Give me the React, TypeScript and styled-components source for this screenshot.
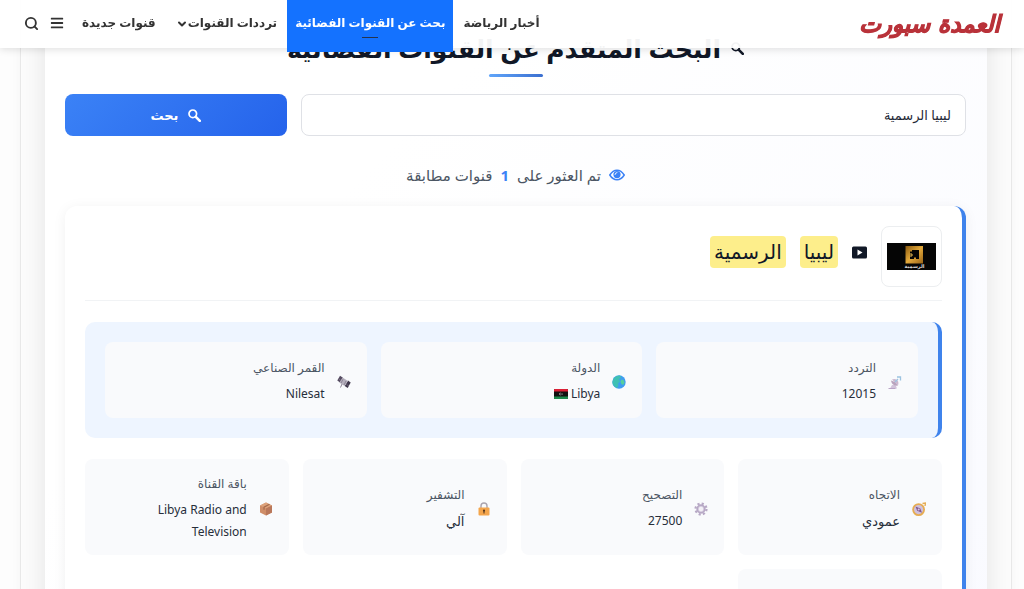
import React from "react";
import styled, { createGlobalStyle } from "styled-components";
import { FaBars } from "react-icons/fa";
import { ChevronDown, Search } from "lucide-react";

const GlobalStyle = createGlobalStyle`
  *, *::before, *::after { box-sizing: border-box; }
  html { overflow: hidden; }
  body {
    margin: 0;
    background: #fdfdfd;
    color: #374151;
    font-family: "Noto Sans", "DejaVu Sans", sans-serif;
    font-size: 13px;
  }
  h1, h2, p, dl, dt, dd, ul { margin: 0; padding: 0; }
`;

const Header = styled.header`
  position: fixed;
  inset: 0 0 auto 0;
  z-index: 10;
  height: 48px;
  padding: 0 24px 0 18px;
  display: flex;
  align-items: center;
  justify-content: space-between;
  background: rgba(255, 255, 255, 0.95);
  box-shadow: 0 1px 8px rgba(0, 0, 0, 0.14);
`;

const Logo = styled.a`
  color: #b9323a;
  font-family: "DejaVu Sans", sans-serif;
  font-size: 23px;
  font-weight: 700;
  font-style: italic;
  line-height: 32px;
  white-space: nowrap;
  text-decoration: none;
  -webkit-text-stroke: 1px #b9323a;
`;

const Nav = styled.nav`
  display: flex;
  align-items: center;
  height: 100%;
`;

const NavLink = styled.a<{ $active?: boolean }>`
  position: relative;
  align-self: flex-start;
  display: flex;
  align-items: center;
  height: ${(p) => (p.$active ? 52 : 48)}px;
  padding: ${(p) => (p.$active ? "0 8px 8px" : "0 10px 4px")};
  background: ${(p) => (p.$active ? "#1472ff" : "transparent")};
  color: ${(p) => (p.$active ? "#fff" : "#333")};
  font-size: 12px;
  font-weight: 700;
  white-space: nowrap;
  text-decoration: none;
  svg { margin-top: 4px; }
  &::after {
    content: "";
    display: ${(p) => (p.$active ? "block" : "none")};
    position: absolute;
    top: 37px;
    left: 50%;
    width: 16px;
    height: 1px;
    margin-left: -8px;
    background: #26334d;
  }
`;

const Tools = styled.div`
  display: flex;
  margin: 0 2px 2px 0;
`;

const IconButton = styled.button`
  display: flex;
  align-items: center;
  justify-content: center;
  width: 26px;
  height: 26px;
  padding: 0;
  border: 0;
  background: none;
  color: #333;
`;

const Frame = styled.div`
  margin: 0 12px 0 20px;
  padding: 0 24px;
  border: 1px solid #e8e8e8;
  border-width: 0 1px;
  background: #fcfcfc;
  box-shadow: 0 0 10px rgba(0, 0, 0, 0.04);
  overflow: hidden;
`;

const Panel = styled.main`
  padding: 26px 21px 24px 20px;
  background: linear-gradient(135deg, #ffffff 30%, #f9faff 100%);
  box-shadow: 0 0 25px rgba(0, 0, 0, 0.1);
`;

const Title = styled.h1`
  display: flex;
  flex-direction: column;
  align-items: center;
  color: #111827;
  font-size: 25px;
  font-weight: 700;
  line-height: 44px;
  &::after {
    content: "";
    width: 54px;
    height: 3px;
    margin-top: 4px;
    border-radius: 2px;
    background: linear-gradient(90deg, #60a5fa, #3b6fd0);
  }
`;

const TitleText = styled.span`
  display: flex;
  align-items: center;
  gap: 10px;
  white-space: nowrap;
`;

const SearchForm = styled.form`
  display: grid;
  grid-template-columns: 3fr 1fr;
  gap: 14px;
  margin-top: 17px;
`;

const SearchInput = styled.input`
  min-width: 0;
  height: 42px;
  padding: 0 14px;
  border: 1px solid #dfe1e6;
  border-radius: 8px;
  background: #fff;
  color: #1f2937;
  font: inherit;
  font-size: 13px;
`;

const SearchButton = styled.button`
  display: flex;
  align-items: center;
  justify-content: center;
  gap: 10px;
  height: 42px;
  padding: 0;
  border: 0;
  border-radius: 8px;
  background: linear-gradient(135deg, #3b82f6, #2563eb);
  color: #fff;
  font: inherit;
  font-size: 13px;
  font-weight: 600;
`;

const Count = styled.p`
  display: flex;
  align-items: center;
  justify-content: center;
  gap: 8px;
  margin: 26px 0 18px;
  color: #4b5563;
  font-size: 15px;
  font-weight: 500;
  line-height: 26px;
  white-space: nowrap;
  strong {
    color: #3b82f6;
    font-weight: 700;
  }
`;

const Card = styled.article`
  padding: 20px;
  border-right: 4px solid #3f83ec;
  border-radius: 12px;
  background: #fff;
  box-shadow: 0 2px 14px rgba(0, 0, 0, 0.06);
`;

const CardHeader = styled.header`
  display: flex;
  align-items: flex-start;
  gap: 14px;
  padding-bottom: 13px;
  border-bottom: 1px solid #f1f3f5;
`;

const Thumb = styled.div`
  display: flex;
  align-items: center;
  justify-content: center;
  width: 61px;
  height: 61px;
  border: 1px solid #eceef0;
  border-radius: 8px;
  background: #fff;
`;

const Name = styled.h2`
  display: flex;
  align-items: center;
  gap: 14px;
  height: 52px;
  color: #111827;
  font-size: 20px;
  font-weight: 500;
`;

const Mark = styled.mark`
  padding: 0 4px;
  border-radius: 4px;
  background: #fdee8b;
  color: inherit;
  line-height: 32px;
`;

const Grid = styled.dl<{ $columns: number; $featured?: boolean }>`
  display: grid;
  grid-template-columns: repeat(${(p) => p.$columns}, minmax(0, 1fr));
  gap: 14px;
  margin-top: 21px;
  ${(p) =>
    p.$featured &&
    `
    padding: 20px;
    border-right: 4px solid #3f83ec;
    border-radius: 10px;
    background: #eef5ff;
  `}
`;

const Cell = styled.div`
  display: flex;
  align-items: center;
  gap: 12px;
  min-height: 76px;
  padding: 15px 16px 12px;
  border-radius: 8px;
  background: #f9fafc;
`;

const CellText = styled.div`
  flex: 1;
  min-width: 0;
  padding-left: 26px;
`;

const Label = styled.dt`
  margin-bottom: 5px;
  color: #4b5563;
  font-size: 12px;
  line-height: 20px;
`;

const Value = styled.dd<{ $arabic?: boolean }>`
  color: #272e3a;
  font-size: ${(p) => (p.$arabic ? 13 : 12)}px;
  line-height: 22px;
`;

const FlagImage = styled.svg`
  vertical-align: -1px;
`;

const Flag = () => (
  <FlagImage width="14" height="10" viewBox="0 0 14 10" aria-hidden="true">
    <rect width="14" height="10" rx="1" fill="#111" />
    <path d="M0 2.500V1q0-1 1-1h12q1 0 1 1v1.500z" fill="#dc1f35" />
    <path d="M0 7.500v1.500q0 1 1 1h12q1 0 1-1V7.500z" fill="#1c8b4c" />
    <circle cx="6.500" cy="5" r="1.200" fill="#d8d8d8" />
    <circle cx="7" cy="5" r=".9" fill="#111" />
    <circle cx="8.200" cy="5" r=".5" fill="#d8d8d8" />
  </FlagImage>
);

const Magnifier = () => (
  <svg width="13" height="13" viewBox="0 0 13 13" fill="none" stroke="currentColor" aria-hidden="true">
    <circle cx="4.800" cy="4.800" r="3.800" strokeWidth="1.700" />
    <path d="M7.800 7.800l4 4" strokeWidth="2.600" strokeLinecap="round" />
  </svg>
);

const Eye = () => (
  <svg width="16" height="12" viewBox="0 0 16 12" aria-hidden="true">
    <path d="M.8 6Q3.800 1.200 8 1.200T15.200 6Q12.200 10.800 8 10.800T.8 6z" fill="#fff" stroke="#3b82f6" strokeWidth="1.500" />
    <circle cx="8" cy="5.600" r="3.600" fill="#3b82f6" />
    <path d="M6 5.500q.2-1.800 2-2" stroke="#fff" strokeWidth=".9" fill="none" strokeLinecap="round" />
  </svg>
);

const ChannelLogo = () => (
  <svg width="49" height="27" viewBox="0 0 49 27" role="img" aria-label="ليبيا الرسمية">
    <defs>
      <linearGradient id="gold" x1="0" y1="0" x2="1" y2="1">
        <stop offset="0" stopColor="#8a5a10" />
        <stop offset=".5" stopColor="#e3a93b" />
        <stop offset="1" stopColor="#9a6518" />
      </linearGradient>
    </defs>
    <rect width="49" height="27" fill="#050505" />
    <path fill="url(#gold)" d="M18.500 3h17.500v17.500H18.500z" />
    <path fill="#050505" d="M25 7h7v9h-3v-1.500h-2V16h-4V8.500h2z" />
    <path d="M23 11h2v2h-2" stroke="#e8bb55" strokeWidth="1" fill="none" />
    <text x="27.500" y="25" textAnchor="middle" fontSize="5" fontWeight="700" fill="#ddd" fontFamily="DejaVu Sans">الرسمية</text>
  </svg>
);

const Play = () => (
  <svg width="15" height="13" viewBox="0 0 15 13" aria-hidden="true">
    <rect width="15" height="12" y=".5" rx="1.500" fill="#111827" />
    <path d="M5.500 3.500v6l5-3z" fill="#fff" />
  </svg>
);

type IconName = "dish" | "globe" | "satellite" | "compass" | "gear" | "lock" | "box";

const drawings: Record<IconName, React.ReactNode> = {
  dish: (
    <>
      <path d="M2 13.500h7L7.500 10H4z" fill="#d2c3da" />
      <path d="M3 5.500q1 6 7 5L7 7z" fill="#b9a3bd" />
      <path d="M4 4.500l6 6q1.200-4-1-5.500T4 4.500z" fill="#cbb8d0" />
      <path d="M7 7L10 4M9 2h3.500v3.500" stroke="#9cc3e0" strokeWidth="1.300" fill="none" />
      <path d="M.5 13.500h7" stroke="#baa4c7" />
    </>
  ),
  globe: (
    <>
      <circle cx="7" cy="7" r="6.700" fill="#3f9cf0" />
      <path d="M1.500 3.500Q4 .2 8 .5l1.500 2L7 4l1 2.500-2 2 .5 2L5 13Q.5 11 .4 7z" fill="#3fc0b4" />
      <path d="M9.500 4.500l2 .5 1 2.500-1.200 2.500-2-1-.8-2.500z" fill="#56cf9d" />
    </>
  ),
  satellite: (
    <>
      <path d="M3 .8l3 2-3 4.700-2.700-2z" fill="#554b61" />
      <path d="M11 5.500l2.700 2-3 5.500-3-2z" fill="#40384c" />
      <path d="M5.500 2.500l5.500 3.500-3.500 5-5-3.500z" fill="#b4aebc" />
      <path d="M5 9l-1.500 3.500M6 4.200l-2 4M9 6l-2 4" stroke="#8d8596" />
      <path d="M1.300 3.500l2.500 2M9.500 9.500l2.500 1.500" stroke="#8e8797" strokeWidth=".6" />
    </>
  ),
  compass: (
    <>
      <circle cx="6.600" cy="7.600" r="5.500" fill="#cfc0dc" stroke="#e6ac52" strokeWidth="1.800" />
      <path d="M10.500 1.500l3-.5-.5 3" stroke="#e6ac52" strokeWidth="1.400" fill="none" />
      <path d="M3.500 4.500l4.800 2L10 10.800l-4.800-2z" fill="#83598f" />
      <circle cx="6.700" cy="7.600" r="1" fill="#d9c8e2" />
    </>
  ),
  gear: (
    <>
      <circle cx="7" cy="7" r="5.500" fill="none" stroke="#b7a8c5" strokeWidth="2.200" strokeDasharray="2.160 2.160" />
      <circle cx="7" cy="7" r="3.800" fill="#d9d0e2" stroke="#b7a8c5" strokeWidth="1.800" />
      <circle cx="7" cy="7" r="2.200" fill="#f3f0f6" />
    </>
  ),
  lock: (
    <>
      <path d="M4 6V4q0-3 3-3t3 3v2" fill="none" stroke="#aaa4ae" strokeWidth="1.400" />
      <rect x="1.500" y="5.500" width="11" height="8" rx="1" fill="#f4a54c" />
      <circle cx="7" cy="8.600" r="1.100" fill="#59391f" />
      <path d="M7 9v2.500" stroke="#59391f" strokeWidth="1.100" />
    </>
  ),
  box: (
    <>
      <path d="M7 .5l6 3v7l-6 3-6-3v-7z" fill="#cf8d68" />
      <path d="M7 .5l6 3-6 3-6-3z" fill="#dda27b" />
      <path d="M7 6.500v7l6-3v-7z" fill="#b9775a" />
      <path d="M10.500 2.200L5 5.200v2.600" stroke="#a66a4c" strokeWidth="1.200" fill="none" />
    </>
  ),
};

const Emoji = ({ name }: { name: IconName }) => (
  <svg width="14" height="14" viewBox="0 0 14 14" aria-hidden="true">
    {drawings[name]}
  </svg>
);

type InfoProps = { icon: IconName; label: string; arabic?: boolean; children: React.ReactNode };

const Info = ({ icon, label, arabic, children }: InfoProps) => (
  <Cell>
    <Emoji name={icon} />
    <CellText>
      <Label>{label}</Label>
      <Value $arabic={arabic}>{children}</Value>
    </CellText>
  </Cell>
);

export default function App() {
  return (
    <div dir="rtl" lang="ar">
      <GlobalStyle />
      <Header>
        <Logo href="#">العمدة سبورت</Logo>
        <Nav>
          <NavLink href="#news">أخبار الرياضة</NavLink>
          <NavLink href="#search" $active>بحث عن القنوات الفضائية</NavLink>
          <NavLink href="#frequencies">
            ترددات القنوات
            <ChevronDown size={12} strokeWidth={4} />
          </NavLink>
          <NavLink href="#new">قنوات جديدة</NavLink>
          <Tools>
            <IconButton aria-label="القائمة"><FaBars size={14} /></IconButton>
            <IconButton aria-label="بحث"><Search size={15} strokeWidth={3} /></IconButton>
          </Tools>
        </Nav>
      </Header>
      <Frame>
        <Panel>
          <Title>
            <TitleText>
              <Magnifier />
              البحث المتقدم عن القنوات الفضائية
            </TitleText>
          </Title>
          <SearchForm onSubmit={(e) => e.preventDefault()}>
            <SearchInput aria-label="اسم القناة" defaultValue="ليبيا الرسمية" />
            <SearchButton type="submit">
              <Magnifier />
              بحث
            </SearchButton>
          </SearchForm>
          <Count>
            <Eye />
            <span>تم العثور على</span>
            <strong>1</strong>
            <span>قنوات مطابقة</span>
          </Count>
          <Card>
            <CardHeader>
              <Thumb><ChannelLogo /></Thumb>
              <Name>
                <Play />
                <Mark>ليبيا</Mark>
                <Mark>الرسمية</Mark>
              </Name>
            </CardHeader>
            <Grid $columns={3} $featured>
              <Info icon="dish" label="التردد">12015</Info>
              <Info icon="globe" label="الدولة">Libya <Flag /></Info>
              <Info icon="satellite" label="القمر الصناعي">Nilesat</Info>
            </Grid>
            <Grid $columns={4}>
              <Info icon="compass" label="الاتجاه" arabic>عمودي</Info>
              <Info icon="gear" label="التصحيح">27500</Info>
              <Info icon="lock" label="التشفير" arabic>آلي</Info>
              <Info icon="box" label="باقة القناة">Libya Radio and Television</Info>
              <Cell />
            </Grid>
          </Card>
        </Panel>
      </Frame>
    </div>
  );
}
